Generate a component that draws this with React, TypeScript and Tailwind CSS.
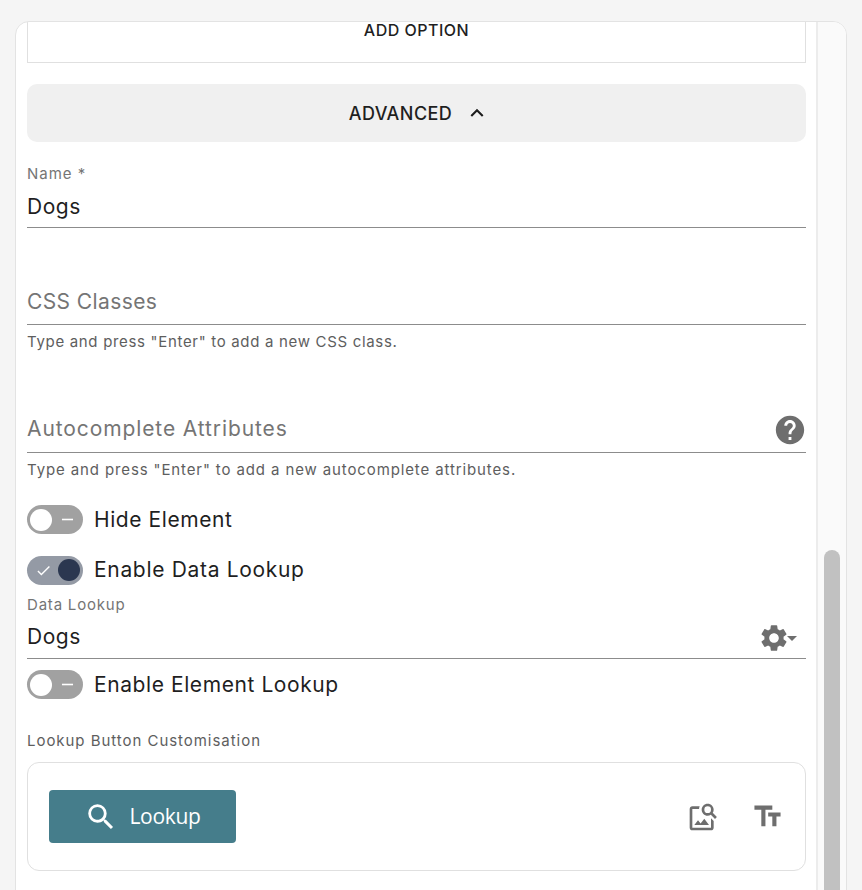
import { MdHelp, MdKeyboardArrowUp, MdOutlineImageSearch, MdSearch, MdSettings, MdArrowDropDown, MdCheck, MdRemove, MdTextFields } from 'react-icons/md'

const Toggle = ({ on = false }: { on?: boolean }) => (
  <div className={`flex h-[29px] w-[56px] shrink-0 items-center justify-between rounded-full px-[3px] ${on ? 'bg-[#949aa5]' : 'bg-[#a1a1a1]'}`}>
    {on ? (
      <>
        <MdCheck className="ml-[5px] text-white" size={17} />
        <span className="h-[22px] w-[22px] rounded-full bg-[#2b3750]" />
      </>
    ) : (
      <>
        <span className="h-[22px] w-[22px] rounded-full bg-white" />
        <MdRemove className="mr-[3px] text-white" size={19} />
      </>
    )}
  </div>
)

export default function App() {
  return (
    <div className="h-[890px] overflow-hidden bg-[#f5f5f5] pl-[15px] pr-[15px] pt-[21px] font-['Inter',sans-serif] text-[#1f1f1f]">
      <div className="flex h-[900px] w-[832px] overflow-hidden rounded-t-[14px] border border-[#e3e3e3] bg-white">
        <div className="w-[800px] shrink-0 pl-[11px] pr-[10px]">
          {/* add option */}
          <div className="flex h-[41px] items-start justify-center border-x border-b border-[#e0e0e0]">
            <span className="text-[16px] font-medium leading-[17px] tracking-[0.5px]">ADD OPTION</span>
          </div>

          <button className="mt-[21px] flex h-[58px] w-full items-center justify-center gap-[12px] rounded-[10px] bg-[#f0f0f0] pl-[6px] text-[18px] font-medium tracking-[0.45px]">
            ADVANCED
            <MdKeyboardArrowUp size={26} />
          </button>

          <div className="mt-[22px] text-[15px] leading-[20px] tracking-[1px] text-[#757575]">Name *</div>
          <div className="mt-[8px] h-[36px] border-b border-[#8c8c8c] text-[21px] leading-[30px] tracking-[0.5px]">Dogs</div>

          <div className="mt-[58px] h-[39px] border-b border-[#8c8c8c] pt-[1px] text-[21px] leading-[30px] tracking-[0.4px] text-[#757575]">CSS Classes</div>
          <p className="mt-[7px] text-[15px] leading-[20px] tracking-[0.68px] text-[#5e5e5e]">Type and press "Enter" to add a new CSS class.</p>

          <div className="mt-[62px] flex h-[39px] items-start justify-between border-b border-[#8c8c8c]">
            <span className="text-[21px] leading-[30px] tracking-[0.9px] text-[#757575]">Autocomplete Attributes</span>
            <MdHelp className="mr-[-1px] mt-[-1px] text-[#6e6e6e]" size={34} />
          </div>
          <p className="mt-[7px] text-[15px] leading-[20px] tracking-[0.88px] text-[#5e5e5e]">Type and press "Enter" to add a new autocomplete attributes.</p>

          <div className="mt-[24px] flex items-center gap-[11px]">
            <Toggle />
            <span className="pt-[1px] text-[21px] leading-[30px] tracking-[0.58px]">Hide Element</span>
          </div>
          <div className="mt-[20px] flex items-center gap-[11px]">
            <Toggle on />
            <span className="text-[21px] leading-[30px] tracking-[0.68px]">Enable Data Lookup</span>
          </div>

          <div className="mt-[10px] text-[15px] leading-[20px] tracking-[0.8px] text-[#757575]">Data Lookup</div>
          <div className="mt-[7px] flex h-[37px] items-start justify-between border-b border-[#8c8c8c]">
            <span className="text-[21px] leading-[30px] tracking-[0.5px]">Dogs</span>
            <span className="mr-[2px] flex items-center text-[#6e6e6e]">
              <MdSettings size={32} />
              <MdArrowDropDown className="ml-[-10px]" size={24} />
            </span>
          </div>

          <div className="mt-[10px] flex items-center gap-[11px]">
            <Toggle />
            <span className="pt-[1px] text-[21px] leading-[30px] tracking-[0.58px]">Enable Element Lookup</span>
          </div>

          <div className="mt-[31px] text-[15px] leading-[20px] tracking-[0.96px] text-[#5e5e5e]">Lookup Button Customisation</div>

          <div className="mt-[11px] flex h-[109px] items-center justify-between rounded-[12px] border border-[#e0e0e0] pl-[21px] pr-[21px]">
            <button className="flex h-[53px] w-[187px] items-center justify-center gap-[11px] rounded-[4px] bg-[#457d8b] font-['Open_Sans',sans-serif] text-[21px] tracking-[-0.3px] text-white">
              <MdSearch size={34} />
              Lookup
            </button>
            <div className="flex items-center gap-[32px] text-[#6e6e6e]">
              <MdOutlineImageSearch size={32} />
              <MdTextFields size={33} />
            </div>
          </div>
        </div>

        {/* scrollbar */}
        <div className="flex-1 border-l-2 border-[#ececec] bg-[#fafafa] pl-[6px] pt-[528px]">
          <div className="h-[400px] w-[16px] rounded-t-full bg-[#c1c1c1]" />
        </div>
      </div>
    </div>
  )
}
